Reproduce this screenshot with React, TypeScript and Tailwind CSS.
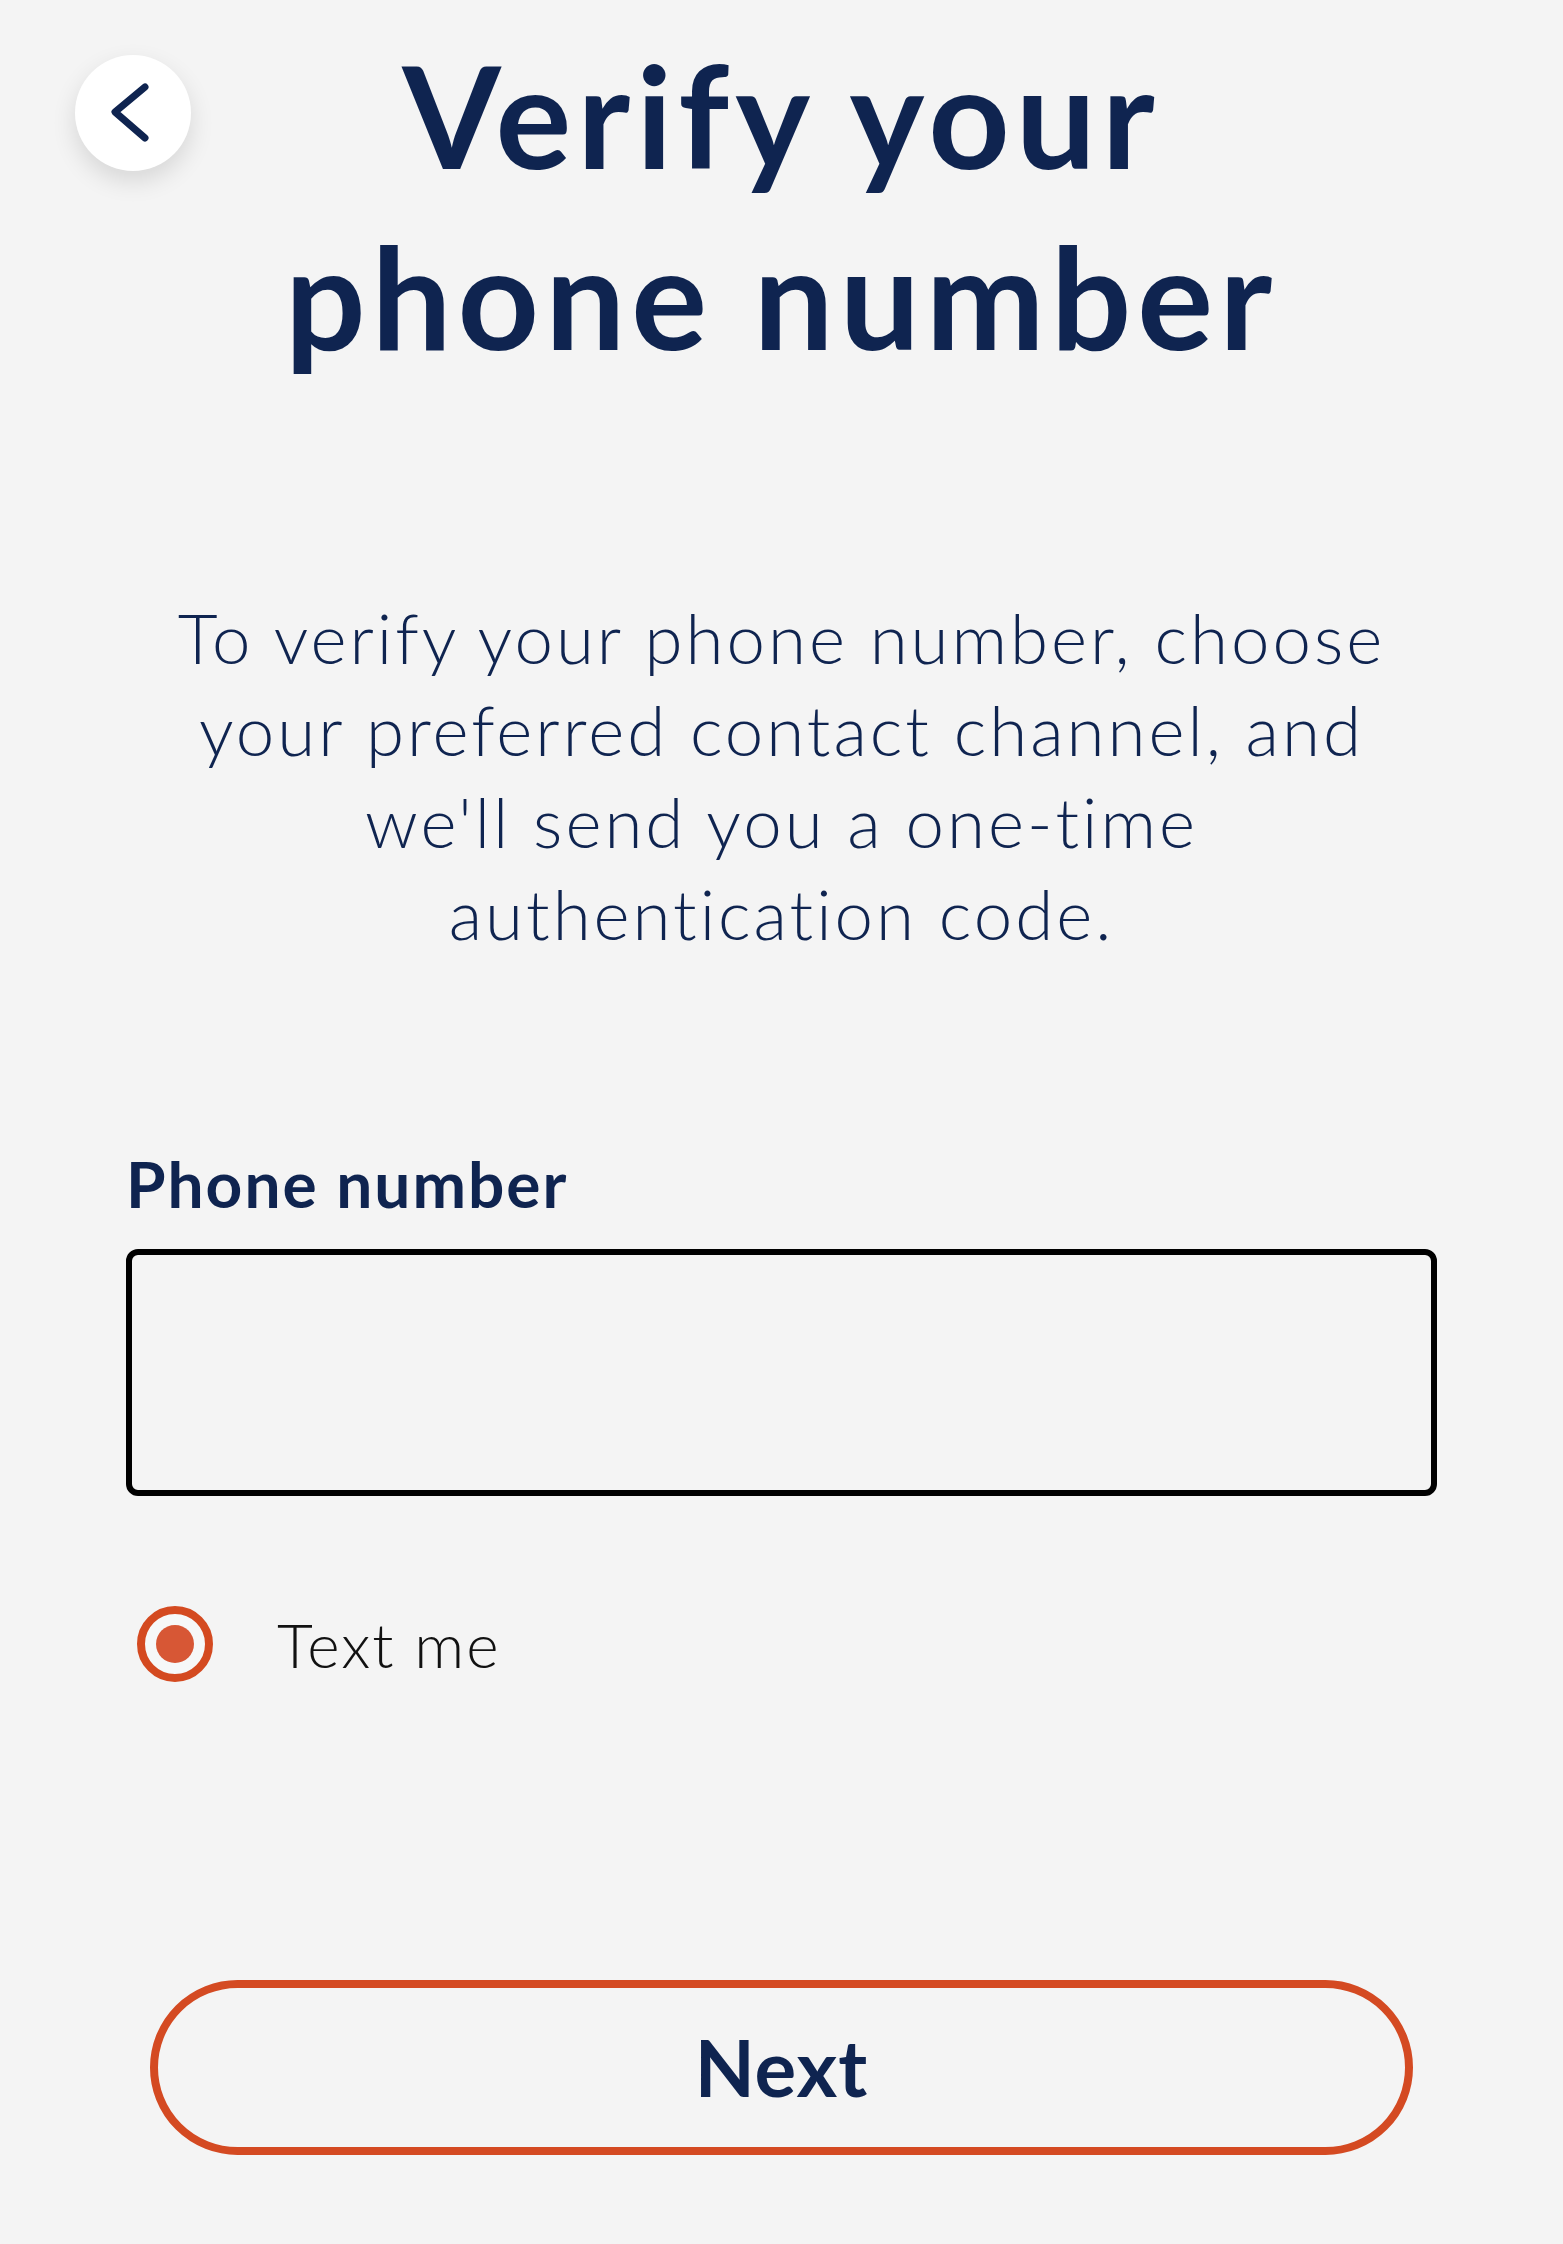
import { useState } from "react";

const NAVY = "#0f2450";

function BackButton() {
  return (
    <button
      type="button"
      aria-label="Back"
      className="absolute left-[75px] top-[55px] flex h-[116px] w-[116px] items-center justify-center rounded-full bg-white shadow-[0_10px_24px_rgba(0,0,0,0.12)]"
    >
      <svg width="116" height="116" viewBox="0 0 116 116" fill="none">
        <path
          d="M70 32 L40 57 L70 83"
          stroke={NAVY}
          strokeWidth="7"
          strokeLinecap="round"
          strokeLinejoin="round"
        />
      </svg>
    </button>
  );
}

export default function App() {
  const [phone, setPhone] = useState("");

  return (
    <div className="min-h-[2244px] w-full bg-[#f4f4f4] font-['Lato','Liberation_Sans',sans-serif]">
      {/* header */}
      <div className="relative pt-[24px]">
        <BackButton />
        <h1 className="text-center text-[142px] font-bold leading-[181px] tracking-[6px] text-[#0f2450]">
          Verify your
          <br />
          phone number
        </h1>
      </div>

      {/* intro */}
      <p className="mx-auto mt-[206px] w-[1300px] text-center text-[69px] font-light leading-[92px] tracking-[3px] text-[#0f2450]">
        To verify your phone number, choose
        <br />
        your preferred contact channel, and
        <br />
        we'll send you a one-time
        <br />
        authentication code.
      </p>

      {/* phone field */}
      <div className="mt-[184px] px-[126px]">
        <label className="block text-[64px] font-bold leading-[80px] tracking-[2px] text-[#0f2450]">
          Phone number
        </label>
        <input
          type="tel"
          value={phone}
          onChange={(e) => setPhone(e.target.value)}
          className="mt-[25px] h-[247px] w-full rounded-[12px] border-[6px] border-black bg-transparent px-6 text-[64px] outline-none"
        />
      </div>

      {/* channel */}
      <div className="mt-[110px] flex items-center gap-[64px] pl-[137px]">
        <span className="flex h-[76px] w-[76px] items-center justify-center rounded-full border-[8px] border-[#d44a20] bg-[#f6f8f8]">
          <span className="h-[38px] w-[38px] rounded-full bg-[#d75735]" />
        </span>
        <span className="text-[62px] font-light leading-[76px] tracking-[2px] text-[#111]">Text me</span>
      </div>

      {/* next */}
      <div className="mt-[298px] px-[150px]">
        <button
          type="button"
          className="flex h-[175px] w-full items-center justify-center rounded-full border-[8px] border-[#d44a22] text-[78px] font-bold tracking-[1px] text-[#0f2450]"
        >
          Next
        </button>
      </div>
    </div>
  );
}
